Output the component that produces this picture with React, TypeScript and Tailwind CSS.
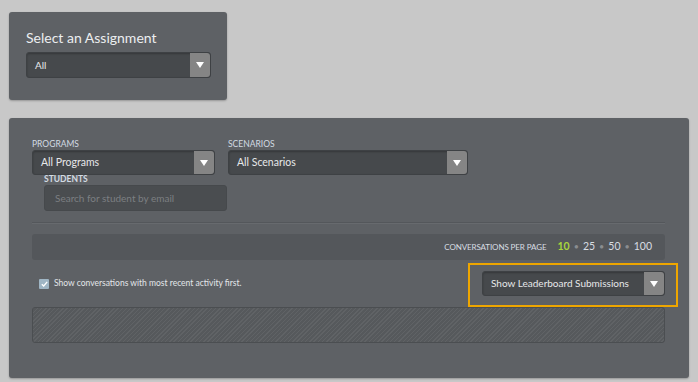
import React from "react";

function Arrow() {
  return (
    <div className="flex h-full w-[20px] items-center justify-center rounded-r-[3px] bg-[#858585]">
      <svg width="8" height="6" viewBox="0 0 8 6">
        <path d="M0 0 L8 0 L4 6 Z" fill="#ffffff" />
      </svg>
    </div>
  );
}

function Select({ label, w, h = 25, textSize = "text-[10.5px]" }: { label: string; w: string; h?: number; textSize?: string }) {
  return (
    <div
      className={`flex ${w} items-stretch rounded-[3px] border border-[#3e4144] bg-[#46494c] shadow-[inset_0_1px_2px_rgba(0,0,0,0.25)]`}
      style={{ height: h }}
    >
      <div className={`flex flex-1 items-center whitespace-nowrap pl-[8px] ${textSize} text-[#e6e8ea]`}>{label}</div>
      <Arrow />
    </div>
  );
}

export default function App() {
  const font = { fontFamily: "Lato, 'Open Sans', sans-serif" };
  return (
    <div className="h-[382px] w-[698px] overflow-hidden bg-[#c8c8c8] pl-[9px] pt-[12px]" style={font}>
      {/* top panel */}
      <div className="h-[88px] w-[218px] rounded-[3px] bg-[#5e6165] pl-[17px] pt-[16px] shadow-[0_1px_2px_rgba(0,0,0,0.25)]">
        <div className="text-[14px] leading-[20px] text-[#eceef0]">Select an Assignment</div>
        <div className="mt-[4px]">
          <Select label="All" w="w-[185px]" h={26} textSize="text-[10px]" />
        </div>
      </div>

      {/* main panel */}
      <div className="mt-[18px] h-[260px] w-[680px] rounded-[3px] bg-[#5e6165] pl-[23px] pr-[24px] pt-[21px] shadow-[0_1px_2px_rgba(0,0,0,0.25)]">
        <div className="flex gap-[13px]">
          <div>
            <div className="text-[8.5px] uppercase leading-[11px] text-[#d3dbe3]">Programs</div>
            <Select label="All Programs" w="w-[183px]" />
          </div>
          <div>
            <div className="text-[8.5px] uppercase leading-[11px] text-[#d3dbe3]">Scenarios</div>
            <Select label="All Scenarios" w="w-[240px]" />
          </div>
        </div>
        <div className="ml-[12px]">
          <div className="text-[8.5px] font-bold uppercase leading-[9px] text-[#d3dbe3]">Students</div>
          <div className="mt-[1px] flex h-[26px] w-[183px] items-center rounded-[3px] border border-[#46494c] bg-[#4a4d50] pl-[10px] text-[10px] text-[#7c7f82]">
            Search for student by email
          </div>
        </div>
        <div className="mt-[11px] h-[2px] border-t border-[#54575b] border-b-[#676a6e] border-b" />
        <div className="mt-[10px] flex h-[26px] items-center justify-end rounded-[3px] bg-[#54575b] pr-[13px] text-[#d8dde2]">
          <span className="mr-[11px] text-[8px] uppercase tracking-[-0.1px]">Conversations per page</span>
          <span className="text-[10.5px] font-bold text-[#a9d63c]">10</span>
          <span className="mx-[4px] text-[9px] text-[#8a8d90]">•</span>
          <span className="text-[10.5px]">25</span>
          <span className="mx-[4px] text-[9px] text-[#8a8d90]">•</span>
          <span className="text-[10.5px]">50</span>
          <span className="mx-[4px] text-[9px] text-[#8a8d90]">•</span>
          <span className="text-[10.5px]">100</span>
        </div>
        <div className="relative mt-[11px] flex h-[25px] items-center">
          <div className="flex items-center pl-[7px]">
            <div className="flex h-[10px] w-[10px] items-center justify-center rounded-[1px] bg-[#9fb5c4]">
              <svg width="7" height="6" viewBox="0 0 7 6">
                <path d="M0.8 3.2 L2.7 5 L6.2 0.8" stroke="#ffffff" strokeWidth="1.3" fill="none" />
              </svg>
            </div>
            <span className="ml-[5px] text-[8.5px] text-[#e3e6e9]">Show conversations with most recent activity first.</span>
          </div>
          <div className="ml-auto">
            <Select label="Show Leaderboard Submissions" w="w-[183px]" textSize="text-[10px]" />
          </div>
          <div className="pointer-events-none absolute left-[436px] top-[-8px] h-[44px] w-[210px] border-[2.5px] border-[#eea600]" />
        </div>
        <div
          className="mt-[11px] h-[36px] rounded-[3px] border border-[#4b4e51]"
          style={{
            backgroundColor: "#56595c",
            backgroundImage:
              "repeating-linear-gradient(135deg, rgba(255,255,255,0.06) 0px, rgba(255,255,255,0.06) 1px, transparent 1px, transparent 3px)",
          }}
        />
      </div>
    </div>
  );
}
